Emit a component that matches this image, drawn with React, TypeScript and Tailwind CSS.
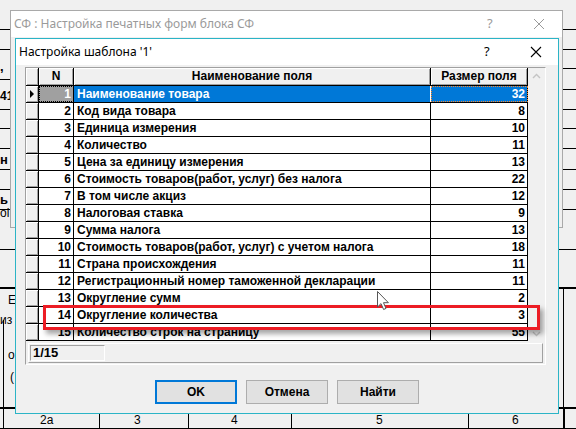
import React from "react";

const rows: [number, string, number][] = [
  [1, "Наименование товара", 32],
  [2, "Код вида товара", 8],
  [3, "Единица измерения", 10],
  [4, "Количество", 11],
  [5, "Цена за единицу измерения", 13],
  [6, "Стоимость товаров(работ, услуг) без налога", 22],
  [7, "В том числе акциз", 12],
  [8, "Налоговая ставка", 9],
  [9, "Сумма налога", 13],
  [10, "Стоимость товаров(работ, услуг) с учетом налога", 18],
  [11, "Страна происхождения", 11],
  [12, "Регистрационный номер таможенной декларации", 11],
  [13, "Округление сумм", 2],
  [14, "Округление количества", 3],
  [15, "Количество строк на страницу", 55],
];

const bevel = "shadow-[inset_1px_1px_0_#ffffff,inset_-1px_-1px_0_#a0a0a0]";

function Backdrop() {
  const rightLines = [29, 49, 68, 89, 109, 128, 148, 169, 189, 209];
  const leftLines = [29, 49, 79, 109, 128, 148, 169, 189, 209];
  const cols = [3, 99, 188, 291, 468, 564];
  return (
    <>
      <svg className="absolute inset-0" width="576" height="429">
        {rightLines.map((y) => (
          <line key={"r" + y} x1="562" x2="576" y1={y + 0.5} y2={y + 0.5} stroke="#000" />
        ))}
        <line x1="558" x2="576" y1="249.5" y2="249.5" stroke="#000" />
        {leftLines.map((y) => (
          <line key={"l" + y} x1="0" x2="10" y1={y + 0.5} y2={y + 0.5} stroke="#000" />
        ))}
        <line x1="0" x2="15" y1="249.5" y2="249.5" stroke="#000" />
        <line x1="0" x2="576" y1="288" y2="288" stroke="#000" strokeWidth="2" />
        <line x1="0" x2="576" y1="408" y2="408" stroke="#000" strokeWidth="2" />
        <line x1="3.5" x2="3.5" y1="320" y2="429" stroke="#000" />
        <line x1="563.5" x2="563.5" y1="288" y2="429" stroke="#000" />
        {cols.map((x) => (
          <line key={"c" + x} x1={x + 0.5} x2={x + 0.5} y1="408" y2="429" stroke="#000" />
        ))}
        <line x1="0" x2="576" y1="428.5" y2="428.5" stroke="#000" />
      </svg>
      <div className="absolute left-0 top-[60px] text-[13px] font-bold leading-none text-black">,</div>
      <div className="absolute left-0 top-[90px] text-[12px] font-bold leading-none text-black">41</div>
      <div className="absolute left-0 top-[153px] text-[13px] font-bold leading-none text-black">н</div>
      <div className="absolute left-0 top-[193px] text-[13px] font-bold leading-none text-black">ь</div>
      <div className="absolute left-0 top-[207px] text-[12px] leading-none text-black">ol</div>
      <div className="absolute left-[8px] top-[294px] text-[12px] leading-none text-black">E</div>
      <div className="absolute left-0 top-[314px] text-[12px] leading-none text-black">из</div>
      <div className="absolute left-[8px] top-[349px] text-[12px] leading-none text-black">o</div>
      <div className="absolute left-[10px] top-[371px] text-[12px] leading-none text-black">(</div>
      <div className="absolute left-[40px] top-[414px] text-[12px] leading-none text-black">2a</div>
      <div className="absolute left-[134px] top-[414px] text-[12px] leading-none text-black">3</div>
      <div className="absolute left-[231px] top-[414px] text-[12px] leading-none text-black">4</div>
      <div className="absolute left-[376px] top-[414px] text-[12px] leading-none text-black">5</div>
      <div className="absolute left-[512px] top-[414px] text-[12px] leading-none text-black">6</div>
    </>
  );
}

function Chevron({ up }: { up?: boolean }) {
  return (
    <svg width="9" height="6" viewBox="0 0 9 6">
      <path d={up ? "M1 5 L4.5 1.5 L8 5" : "M1 1 L4.5 4.5 L8 1"} fill="none" stroke="#c4c4c4" strokeWidth="1.4" />
    </svg>
  );
}

function Grid() {
  return (
    <div className="mt-[2px] ml-[9px] flex h-[298px] w-[521px] flex-col border border-t-[#a0a0a0] border-l-[#a0a0a0] border-b-white border-r-white">
      <div className="flex h-[274px]">
        <div className="flex w-[502px] flex-col">
          <div className="flex h-[18px] border-b border-black text-[12px] font-bold leading-[17px] text-black">
            <div className={`w-[13px] border-r border-black bg-[#f0f0f0] ${bevel}`} />
            <div className={`w-[35px] border-r border-black bg-[#f0f0f0] text-center ${bevel}`}>N</div>
            <div className={`w-[357px] border-r border-black bg-[#f0f0f0] text-center ${bevel}`}>Наименование поля</div>
            <div className={`w-[97px] border-r border-black bg-[#f0f0f0] text-center ${bevel}`}>Размер поля</div>
          </div>
          {rows.map(([n, name, size]) => {
            const sel = n === 1;
            return (
              <div key={n} className="flex h-[17px] border-b border-black text-[12px] font-bold leading-[16px]">
                <div className={`flex w-[13px] items-center justify-center border-r border-black bg-[#f0f0f0] ${bevel}`}>
                  {sel && (
                    <svg width="4" height="8" viewBox="0 0 4 8">
                      <path d="M0 0 L4 4 L0 8 Z" fill="#000" />
                    </svg>
                  )}
                </div>
                <div
                  className={
                    sel
                      ? "w-[35px] border-r border-black bg-[#a0a0a0] pr-[2px] text-right text-white outline-1 -outline-offset-1 outline-dotted outline-black"
                      : "w-[35px] border-r border-black bg-white pr-[2px] text-right text-black"
                  }
                >
                  {n}
                </div>
                <div
                  className={
                    sel
                      ? "w-[357px] overflow-hidden whitespace-nowrap border-r border-white bg-[#0078d7] pl-[3px] text-white"
                      : "w-[357px] overflow-hidden whitespace-nowrap border-r border-black bg-white pl-[3px] text-black"
                  }
                >
                  {name}
                </div>
                <div
                  className={
                    sel
                      ? "w-[97px] border-r border-black bg-[#0078d7] pr-[2px] text-right text-white outline-1 -outline-offset-1 outline-dotted outline-[#ff8728]"
                      : "w-[97px] border-r border-black bg-white pr-[2px] text-right text-black"
                  }
                >
                  {size}
                </div>
              </div>
            );
          })}
        </div>
        <div className="flex w-[17px] flex-col items-center justify-between bg-[#f0f0f0] py-[5px]">
          <Chevron up />
          <Chevron />
        </div>
      </div>
      <div className="flex h-[22px] px-[2px] pt-[1px]">
        <div className="flex h-[20px] flex-1 items-center border border-t-white border-l-white border-b-[#a0a0a0] border-r-[#a0a0a0] px-[1px]">
          <div className="h-[16px] w-[75px] border border-t-[#a0a0a0] border-l-[#a0a0a0] border-b-white border-r-white pl-[2px] text-[13px] font-bold leading-[14px] text-black">
            1/15
          </div>
        </div>
      </div>
    </div>
  );
}

export default function App() {
  return (
    <div
      className="relative h-[429px] w-[576px] overflow-hidden bg-[#f0f0f0]"
      style={{ fontFamily: '"Liberation Sans", Arial, sans-serif' }}
    >
      <Backdrop />

      <div className="absolute left-[10px] top-[10px] h-[218px] w-[553px] border border-[#a9a9a9] bg-[#f0f0f0]">
        <div className="flex h-[26px] items-center bg-white pl-[3px] font-['Noto_Sans',sans-serif] text-[12px] text-[#9a9a9a]">
          <span className="flex-1">СФ : Настройка печатных форм блока СФ</span>
          <span className="w-[46px] text-[13px]">?</span>
          <svg width="12" height="12" viewBox="0 0 12 12" className="mr-[17px]">
            <path d="M1 1 L11 11 M11 1 L1 11" stroke="#9a9a9a" strokeWidth="1" />
          </svg>
        </div>
      </div>

      <div className="absolute left-[15px] top-[38px] flex h-[376px] w-[544px] flex-col border border-[#2bb4c6] bg-[#f0f0f0]">
        <div className="flex h-[26px] shrink-0 items-center bg-white pl-[3px] font-['Noto_Sans',sans-serif] text-[12px] text-black">
          <span className="flex-1">Настройка шаблона '1'</span>
          <span className="w-[46px] text-[13px]">?</span>
          <svg width="12" height="12" viewBox="0 0 12 12" className="mr-[16px]">
            <path d="M1 1 L11 11 M11 1 L1 11" stroke="#000" strokeWidth="1.1" />
          </svg>
        </div>
        <Grid />
        <div className="mt-[15px] flex justify-center gap-[9px] text-[12px] font-bold text-black">
          <button className="h-[24px] w-[82px] border-2 border-[#0078d7] bg-[#e1e1e1]">OK</button>
          <button className="h-[24px] w-[82px] border border-[#adadad] bg-[#e1e1e1]">Отмена</button>
          <button className="h-[24px] w-[82px] border border-[#adadad] bg-[#e1e1e1]">Найти</button>
        </div>
      </div>

      <div className="absolute left-[43px] top-[305px] h-[25px] w-[497px] border-[3px] border-[#ec1c24] shadow-[3px_4px_5px_rgba(0,0,0,0.35)]" />

      <svg className="absolute left-[377px] top-[291px]" width="13" height="20" viewBox="0 0 13 20">
        <path d="M0.5 0.5 L0.5 16 L4 12.6 L6.6 18.5 L9 17.4 L6.5 11.7 L11.4 11.7 Z" fill="#fff" stroke="#555" strokeWidth="1" />
      </svg>
    </div>
  );
}
